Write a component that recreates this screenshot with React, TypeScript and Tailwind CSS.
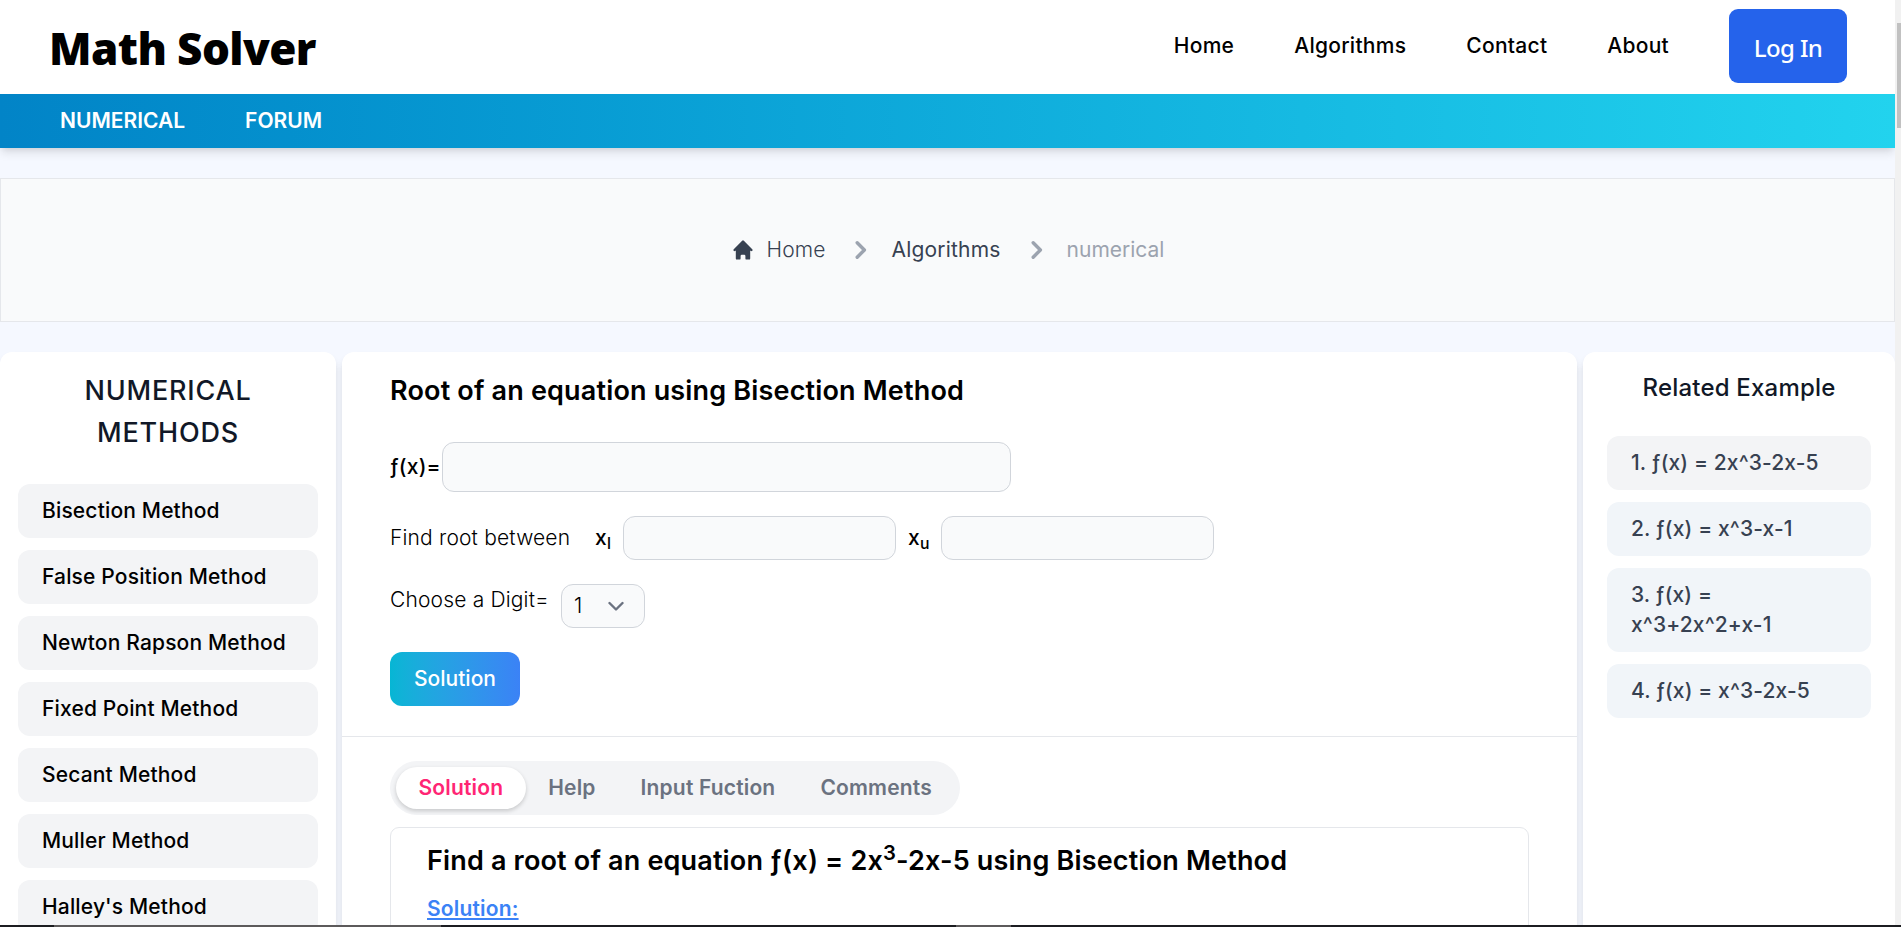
const methods = [
  'Bisection Method',
  'False Position Method',
  'Newton Rapson Method',
  'Fixed Point Method',
  'Secant Method',
  'Muller Method',
  "Halley's Method",
];

const examples = [
  { text: '1. ƒ(x) = 2x^3-2x-5', tone: 'bg-[#f3f4f6]' },
  { text: '2. ƒ(x) = x^3-x-1', tone: 'bg-[#f1f5f9]' },
  { text: '3. ƒ(x) =\nx^3+2x^2+x-1', tone: 'bg-[#f1f5f9]' },
  { text: '4. ƒ(x) = x^3-2x-5', tone: 'bg-[#f1f5f9]' },
];

const panel =
  'rounded-xl bg-white shadow-[0_6px_9px_-1px_rgba(0,0,0,0.1),0_3px_6px_-3px_rgba(0,0,0,0.1)]';
const field = 'rounded-xl border border-[#d1d5db] bg-[#f9fafb] outline-none';

function Chevron() {
  return (
    <svg className="h-[18px] w-3 shrink-0" viewBox="0 0 12 18" fill="none" stroke="#9ca3af" strokeWidth="3.4" strokeLinecap="round" strokeLinejoin="round">
      <path d="M2.2 1.8 9.4 9l-7.2 7.2" />
    </svg>
  );
}

function Header() {
  return (
    <header className="shrink-0 shadow-[0_6px_9px_-1px_rgba(0,0,0,0.1),0_3px_6px_-3px_rgba(0,0,0,0.1)]">
      <div className="flex h-[94px] items-start justify-between bg-white pl-[49px] pr-12">
        <h1 className="mt-[18px] whitespace-nowrap font-['Noto_Sans'] text-[44px] font-black leading-[60px] tracking-[-0.6px]">Math Solver</h1>
        <nav className="flex gap-[60px] pt-[9px] text-[21px] font-medium leading-[74px] tracking-[0.27px]">
          <a>Home</a>
          <a>Algorithms</a>
          <a>Contact</a>
          <a>About</a>
          <button className="h-[74px] w-[118px] rounded-[9px] bg-[#2563eb] pt-0.5 font-['Noto_Sans'] text-[24px] font-medium tracking-[-0.6px] text-white">Log In</button>
        </nav>
      </div>
      <div className="flex h-[54px] items-center gap-[60px] bg-gradient-to-r from-[#0284c7] to-[#22d3ee] pl-[60px] text-[21px] font-semibold text-white">
        <a>NUMERICAL</a>
        <a>FORUM</a>
      </div>
    </header>
  );
}

function Breadcrumb() {
  return (
    <nav className="mt-[30px] flex h-36 shrink-0 items-center justify-center border border-[#e5e7eb] bg-[#f9fafb] text-[21px] text-[#374151]">
      <svg className="mr-3 h-6 w-6" viewBox="0 0 20 20" fill="currentColor">
        <path d="M10.707 2.293a1 1 0 00-1.414 0l-7 7a1 1 0 001.414 1.414L4 10.414V17a1 1 0 001 1h2a1 1 0 001-1v-2a1 1 0 011-1h2a1 1 0 011 1v2a1 1 0 001 1h2a1 1 0 001-1v-6.586l.293.293a1 1 0 001.414-1.414l-7-7z" />
      </svg>
      <span className="font-light tracking-[0.1px]">Home</span>
      <span className="ml-[30px] mr-[24px] flex"><Chevron /></span>
      <span className="tracking-[0.2px]">Algorithms</span>
      <span className="ml-[30px] mr-[24px] flex"><Chevron /></span>
      <span className="text-[#9ca3af]">numerical</span>
    </nav>
  );
}

function Solver() {
  return (
    <main className={`${panel} h-[700px] w-[1235px] shrink-0 tracking-[0.17px]`}>
      <div className="flex h-[385px] flex-col items-start border-b border-[#e5e7eb] pl-12 pt-[18px]">
        <h2 className="text-[27px] font-semibold leading-[42px]">Root of an equation using Bisection Method</h2>
        <div className="mt-[30px] flex items-center text-[21px] font-medium">
          <label className="w-[52px]">ƒ(x)=</label>
          <input className={`${field} h-[50px] w-[569px]`} />
        </div>
        <div className="mt-6 flex h-11 items-center text-[21px] font-light">
          <span className="w-[205px]">Find root between</span>
          <label className="w-7 font-medium">x<sub>l</sub></label>
          <input className={`${field} h-11 w-[273px]`} />
          <label className="ml-[12px] w-[33px] font-medium">x<sub>u</sub></label>
          <input className={`${field} h-11 w-[273px]`} />
        </div>
        <div className="mt-6 flex h-11 items-start text-[21px] font-light">
          <span className="w-[171px] leading-[31px]">Choose a Digit=</span>
          <div className={`${field} flex h-11 w-[84px] items-center justify-between pl-3 pr-5`}>
            <span>1</span>
            <svg className="h-[11px] w-4" viewBox="0 0 16 11" fill="none" stroke="#6b7280" strokeWidth="2.4" strokeLinecap="round" strokeLinejoin="round">
              <path d="m1.5 2 6.5 6.5L14.500 2" />
            </svg>
          </div>
        </div>
        <button className="mt-6 h-[54px] w-[130px] rounded-xl bg-gradient-to-r from-[#06b6d4] to-[#3b82f6] text-[21px] font-medium tracking-normal text-white">Solution</button>
      </div>
      <div className="px-12 pt-6">
        <div className="flex h-[54px] w-fit items-center rounded-full bg-[#f3f4f6] p-1.5 text-[21px] font-semibold text-[#6b7280]">
          <button className="h-[42px] rounded-full bg-white px-[22.5px] text-[#ff2574] shadow-[0_2px_4px_rgba(0,0,0,0.18)]">Solution</button>
          <button className="px-[22.5px]">Help</button>
          <button className="px-[22.5px]">Input Fuction</button>
          <button className="px-[22.5px]">Comments</button>
        </div>
        <section className="mt-3 h-72 rounded-[9px] border border-[#e5e7eb] pl-9 pt-3">
          <h3 className="text-[27px] font-semibold leading-[42px]">
            Find a root of an equation ƒ(x) = 2x<sup>3</sup>-2x-5 using Bisection Method
          </h3>
          <p className="mt-3 text-[21px] font-semibold leading-[30px] text-[#3b82f6] underline">Solution:</p>
        </section>
      </div>
    </main>
  );
}

export default function App() {
  return (
    <div className="flex h-[927px] w-[1901px] flex-col overflow-hidden bg-[#f5f8ff] font-['Inter',sans-serif] text-black">
      <div className="flex min-h-0 flex-1">
        <div className="flex w-[1895px] shrink-0 flex-col overflow-hidden">
          <Header />
          <Breadcrumb />
          <div className="mt-[30px] flex min-h-0 flex-1 gap-1.5">
            <aside className={`${panel} h-[700px] w-[336px] shrink-0 px-[18px] pt-[18px]`}>
              <h2 className="mx-auto w-[200px] text-center text-[27px] font-medium leading-[42px] tracking-[0.8px] text-[#111827]">NUMERICAL METHODS</h2>
              <ul className="mt-[30px] flex flex-col gap-3">
                {methods.map((m) => (
                  <li key={m} className="h-[54px] shrink-0 whitespace-nowrap rounded-xl bg-[#f3f4f6] px-6 py-3 text-[21px] font-medium leading-[30px] tracking-[0.16px]">{m}</li>
                ))}
              </ul>
            </aside>
            <Solver />
            <aside className={`${panel} h-[700px] flex-1 px-6 pt-[18px]`}>
              <h2 className="text-center text-[24px] font-medium leading-9 tracking-[0.2px] text-[#111827]">Related Example</h2>
              <ul className="mt-[30px] flex flex-col gap-3">
                {examples.map((e) => (
                  <li key={e.text} className={`${e.tone} whitespace-pre-line rounded-xl px-6 py-3 text-[21px] font-medium leading-[30px] tracking-[0.12px] text-[#374151]`}>{e.text}</li>
                ))}
              </ul>
            </aside>
          </div>
        </div>
        <div className="flex-1 bg-[#f1f1f1] pl-0.5 pt-[23px]">
          <div className="h-[105px] bg-[#c1c1c1]" />
        </div>
      </div>
      <div className="flex h-0.5 shrink-0 bg-[#1c1d21]">
        <div className="ml-[54px] w-[387px] bg-[#5c5a5b]" />
        <div className="ml-[515px] w-[55px] bg-[#5c5a5b]" />
      </div>
    </div>
  );
}
